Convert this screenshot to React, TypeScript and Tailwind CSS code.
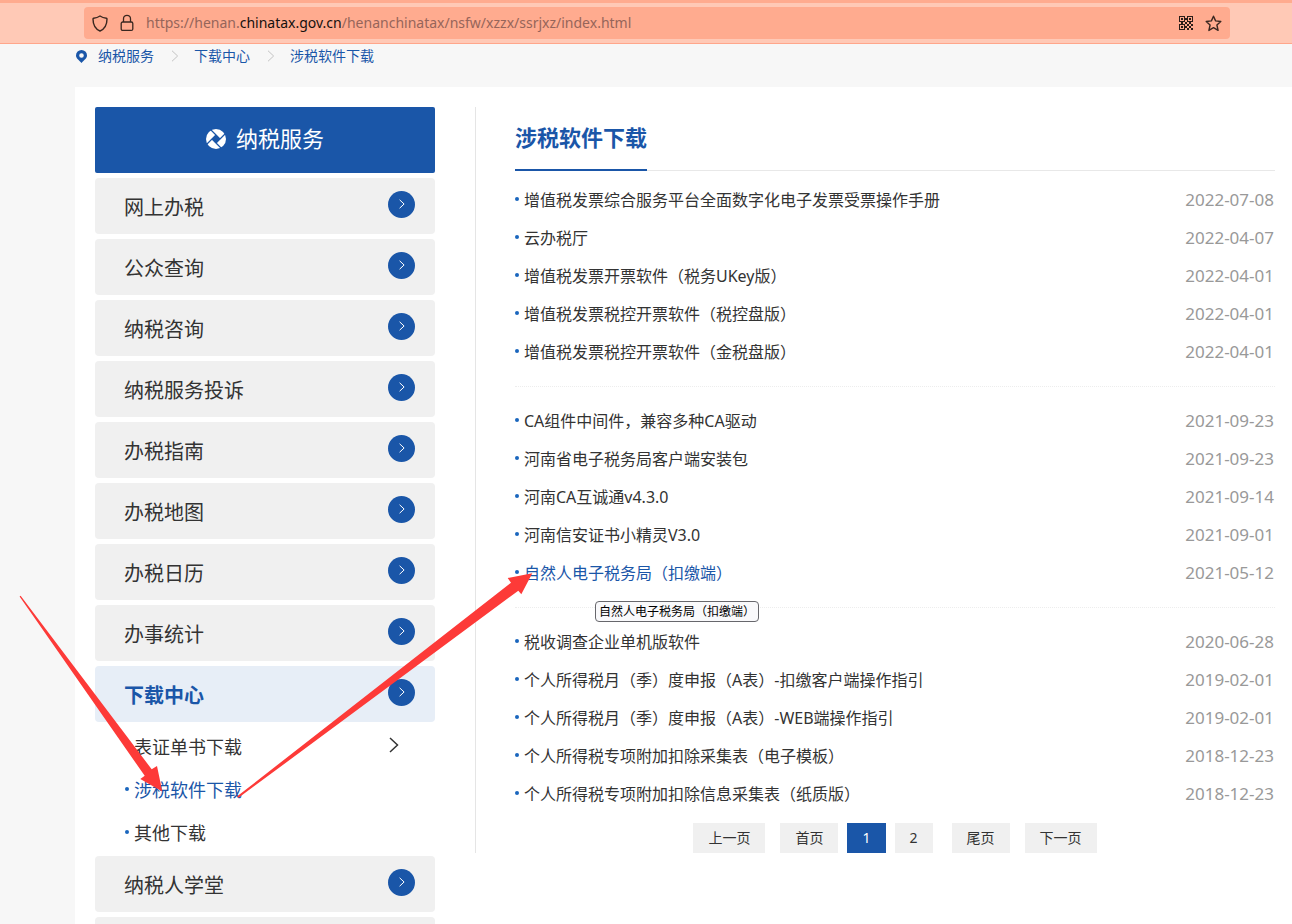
const menu = ["网上办税", "公众查询", "纳税咨询", "纳税服务投诉", "办税指南", "办税地图", "办税日历", "办事统计", "下载中心", "纳税人学堂"];

const subMenu = ["表证单书下载", "涉税软件下载", "其他下载"];

const groups = [
  [
    { title: "增值税发票综合服务平台全面数字化电子发票受票操作手册", date: "2022-07-08" },
    { title: "云办税厅", date: "2022-04-07" },
    { title: "增值税发票开票软件（税务UKey版）", date: "2022-04-01" },
    { title: "增值税发票税控开票软件（税控盘版）", date: "2022-04-01" },
    { title: "增值税发票税控开票软件（金税盘版）", date: "2022-04-01" },
  ],
  [
    { title: "CA组件中间件，兼容多种CA驱动", date: "2021-09-23" },
    { title: "河南省电子税务局客户端安装包", date: "2021-09-23" },
    { title: "河南CA互诚通v4.3.0", date: "2021-09-14" },
    { title: "河南信安证书小精灵V3.0", date: "2021-09-01" },
    { title: "自然人电子税务局（扣缴端）", date: "2021-05-12", active: true },
  ],
  [
    { title: "税收调查企业单机版软件", date: "2020-06-28" },
    { title: "个人所得税月（季）度申报（A表）-扣缴客户端操作指引", date: "2019-02-01" },
    { title: "个人所得税月（季）度申报（A表）-WEB端操作指引", date: "2019-02-01" },
    { title: "个人所得税专项附加扣除采集表（电子模板）", date: "2018-12-23" },
    { title: "个人所得税专项附加扣除信息采集表（纸质版）", date: "2018-12-23" },
  ],
];

const Chevron = ({ className }: { className: string }) => (
  <svg viewBox="0 0 10 16" className={className} fill="none" stroke="currentColor" aria-hidden>
    <path d="M1 1l7.5 7L1 15" vectorEffect="non-scaling-stroke" />
  </svg>
);

const Bullet = () => <span className="mb-[2px] size-1 shrink-0 rounded-full bg-[#1a66bd]" />;

const QrIcon = () => (
  <svg viewBox="0 0 14 14" className="size-[14px]" fill="#2b1d18" shapeRendering="crispEdges" aria-hidden>
    <path fillRule="evenodd" d="M0 0h6v6H0zM1 1v4h4V1zM8 0h6v6H8zM9 1v4h4V1zM0 8h6v6H0zM1 9v4h4V9z" />
    <path d="M2 2h2v2H2zM10 2h2v2h-2zM2 10h2v2H2zM6 2h2v2H6zM2 6h2v2H2zM6 6h2v2H6zM10 6h2v2h-2zM8 8h2v2H8zM12 8h2v2h-2zM6 10h2v2H6zM10 10h2v2h-2zM8 12h2v2H8zM12 12h2v2h-2z" />
  </svg>
);

const AddressBar = () => (
  <header className="shrink-0 border-t-3 border-b border-t-[#ffab8f] border-b-[#ffa68b] bg-[#ffc9b6] py-1 pr-[62px] pl-[84px]">
    <div className="flex h-8 items-center rounded bg-[#ffab8f] px-2 text-[#3a2720]">
      <svg viewBox="0 0 16 17" className="h-[17px] w-4" fill="none" stroke="currentColor" strokeWidth="1.4" strokeLinejoin="round" aria-hidden>
        <path d="M8 1C6 2.300 3.700 3 1.600 3.300 1.200 3.400 1 3.600 1 4c0 5.600 1.900 9.800 7 12 5.100-2.200 7-6.400 7-12 0-.4-.2-.6-.6-.7C12.300 3 10 2.300 8 1z" />
      </svg>
      <svg viewBox="0 0 14 18" className="mx-3 h-[18px] w-[14px]" fill="none" stroke="currentColor" strokeWidth="1.3" aria-hidden>
        <rect x="1.2" y="8" width="11.6" height="8.4" rx="1.5" />
        <path d="M3.5 8V4.8a3.5 3.5 0 0 1 7 0V8" />
      </svg>
      <p className="flex-1 text-sm text-[#96655a]">
        https://henan.<span className="text-[#15100e]">chinatax.gov.cn</span>/henanchinatax/nsfw/xzzx/ssrjxz/index.html
      </p>
      <button aria-label="二维码"><QrIcon /></button>
      <button aria-label="收藏" className="ml-3">
        <svg viewBox="0 0 17 17" className="size-[17px]" fill="none" stroke="currentColor" strokeWidth="1.4" strokeLinejoin="round" aria-hidden>
          <path d="M8.500 1.200l2.100 4.700 5.200.6-3.900 3.500 1.200 5.400-4.600-2.800-4.600 2.800 1.200-5.400-3.900-3.500 5.200-.6z" />
        </svg>
      </button>
    </div>
  </header>
);

const Breadcrumb = () => (
  <nav className="flex h-[43px] items-start pt-[2px] pl-[76px] text-sm text-[#1a56a8]">
    <svg viewBox="0 0 11 13" className="mt-1 mr-[11px] h-[13px] w-[11px]" aria-hidden>
      <path fill="#1a56a8" fillRule="evenodd" d="M5.5 0a5.5 5.5 0 0 1 5.5 5.5c0 2.6-2.4 4.200-5.500 7.500C2.400 9.700 0 8.100 0 5.500A5.500 5.500 0 0 1 5.500 0zm0 3.200a2.300 2.300 0 1 0 0 4.600 2.300 2.300 0 0 0 0-4.600z" />
    </svg>
    <a href="#">纳税服务</a>
    <Chevron className="mt-1 mr-[15px] ml-[17px] h-3 w-2 text-[#c4c4c4]" />
    <a href="#">下载中心</a>
    <Chevron className="mt-1 mr-[15px] ml-[17px] h-3 w-2 text-[#c4c4c4]" />
    <a href="#">涉税软件下载</a>
  </nav>
);

const Sidebar = () => (
  <aside className="w-[340px] shrink-0">
    <h2 className="flex h-[66px] items-center justify-center gap-[10px] rounded-xs bg-[#1a56a8] pb-[3px] text-[22px] text-white">
      <svg viewBox="0 0 20 20" className="size-5" aria-hidden>
        <circle cx="10" cy="10" r="10" fill="#fff" />
        <path d="M10 6l4 4-4 4-4-4z" fill="#1a56a8" />
        <path d="M14 10L5 1M10 14l9-9M6 10l9 9M10 6l-9 9" stroke="#1a56a8" strokeWidth="1.2" />
      </svg>
      纳税服务
    </h2>
    <ul>
      {menu.map((label) => {
        const open = label === "下载中心";
        return (
          <li key={label}>
            <a
              href="#"
              className={`mt-[5px] flex h-14 items-center justify-between rounded pr-5 pl-[29px] text-xl ${
                open ? "bg-[#e7eef7] font-bold text-[#1a56a8]" : "bg-[#f0f0f0] text-[#333]"
              }`}
            >
              <span className="pt-[3px]">{label}</span>
              <span className="mb-1 flex size-[27px] items-center justify-center rounded-full bg-[#1a56a8] text-white">
                <Chevron className="h-[10px] w-[6px]" />
              </span>
            </a>
            {open && (
              <ul className="-mb-[3px] pt-[3px]">
                {subMenu.map((item, i) => (
                  <li key={item}>
                    <a href="#" className={`flex h-[43px] items-center gap-[5px] pr-9 pl-[30px] text-lg ${i === 1 ? "text-[#1a56a8]" : "text-[#333]"}`}>
                      <Bullet />
                      <span className="flex-1">{item}</span>
                      {i === 0 && <Chevron className="mb-1 h-4 w-[10px] stroke-[1.5]" />}
                    </a>
                  </li>
                ))}
              </ul>
            )}
          </li>
        );
      })}
      <li className="mt-[5px] h-14 rounded bg-[#f0f0f0]" />
    </ul>
  </aside>
);

const pageLink = "flex h-[30px] items-center bg-[#f0f0f0] px-[15px]";

const Pagination = () => (
  <nav className="mt-[10px] flex justify-center gap-[15px] text-sm text-[#333]">
    <a href="#" className={pageLink}>上一页</a>
    <div className="mr-1 flex gap-[9px]">
      <a href="#" className={pageLink}>首页</a>
      <a href="#" aria-current="page" className="flex h-[30px] items-center bg-[#1a56a8] px-[15px] text-white">1</a>
      <a href="#" className={pageLink}>2</a>
    </div>
    <a href="#" className={pageLink}>尾页</a>
    <a href="#" className={pageLink}>下一页</a>
  </nav>
);

const Downloads = () => (
  <main className="ml-10 min-w-0 flex-1 self-start border-l border-[#e5e5e5] pl-[39px]">
    <div className="flex h-16 border-b border-[#e8e8e8]">
      <h1 className="-mb-px border-b-2 border-[#1a56a8] text-[22px] leading-[60px] font-bold text-[#1a56a8]">涉税软件下载</h1>
    </div>
    <div className="mt-[10px]">
      {groups.map((group, i) => (
        <ul key={i} className={i < groups.length - 1 ? "mb-[15px] border-b border-dotted border-[#ededed] pb-[15px]" : ""}>
          {group.map((item) => (
            <li key={item.title} className="relative flex h-[38px] items-center gap-[5px]">
              <Bullet />
              <a href="#" className={`flex-1 ${item.active ? "text-[#1a56a8]" : "text-[#333]"}`}>{item.title}</a>
              <time className="pr-px text-[17px] text-[#999]">{item.date}</time>
              {item.active && (
                <span role="tooltip" className="absolute top-[47px] left-20 z-10 rounded border border-[#67676c] bg-[#f9f9fb] px-[3px] text-xs leading-[19px] text-black">
                  {item.title}
                </span>
              )}
            </li>
          ))}
        </ul>
      ))}
    </div>
    <Pagination />
  </main>
);

// Hand-drawn pointers: menu entry first, then the download itself
const Arrows = () => (
  <svg width="600" height="900" className="pointer-events-none absolute top-0 left-0 z-20" fill="#fd3a38" aria-hidden>
    <path d="M19.600 596.400L20.600 595.800 151.700 769.300 157 766l5.300 25.600-22-12.600 4.400-3.200z" />
    <path d="M237.200 796.300L511 582.700l-3.300-4.700 24.600-4.700-11 21-3-3.600L238.500 797.800z" />
  </svg>
);

export default function App() {
  return (
    <div className="relative flex h-screen flex-col overflow-hidden bg-[#f7f7f7] font-['Noto_Sans','Noto_Sans_CJK_SC',sans-serif]">
      <AddressBar />
      <div className="min-h-0 flex-1 overflow-hidden">
        <Breadcrumb />
        <div className="ml-[75px] flex bg-white pt-5 pr-[17px] pb-10 pl-5">
          <Sidebar />
          <Downloads />
        </div>
      </div>
      <Arrows />
    </div>
  );
}
